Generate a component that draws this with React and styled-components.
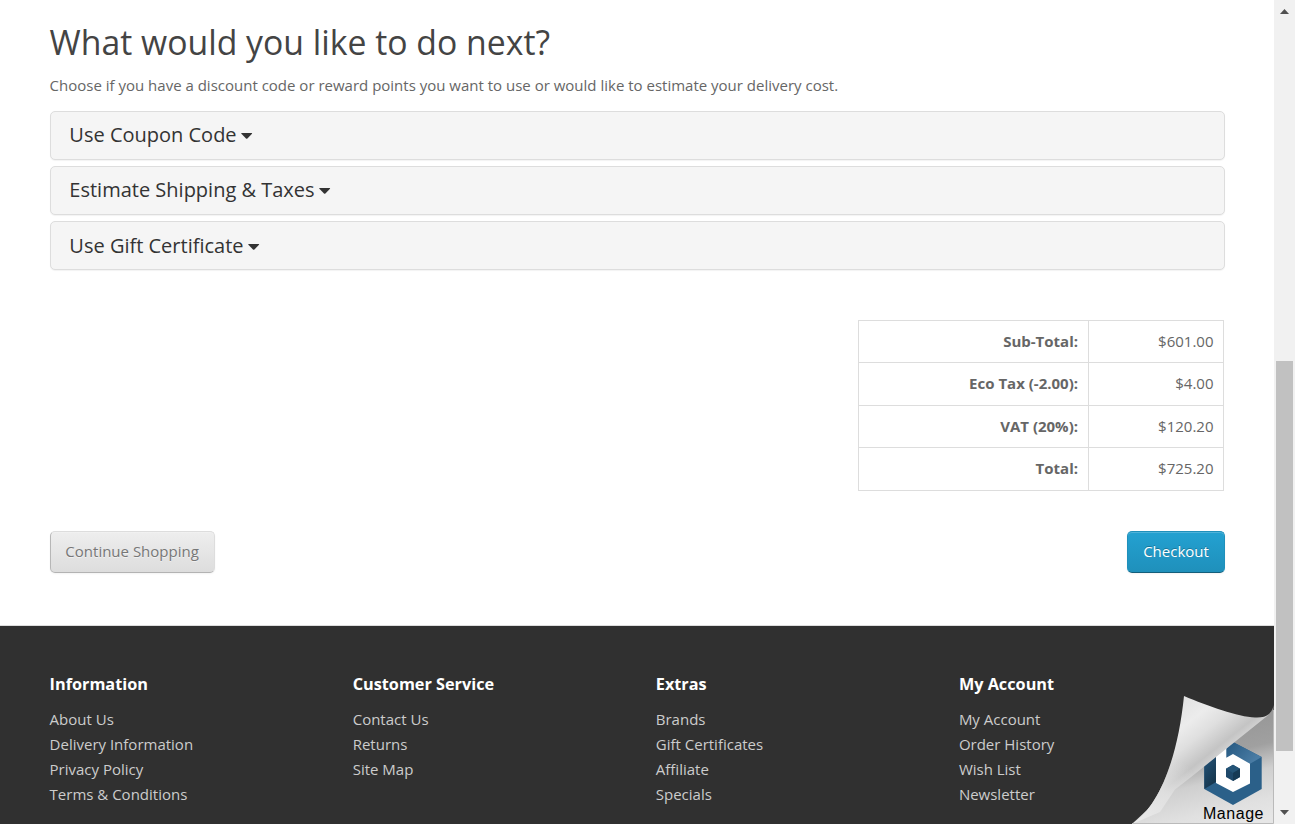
import React from "react";
import styled, { createGlobalStyle } from "styled-components";

const Global = createGlobalStyle`
  * { box-sizing: border-box; }
  body { margin: 0; background: #fff; overflow: hidden; }
`;

const Screen = styled.div`
  display: flex;
  width: 1295px;
  height: 824px;
  overflow: hidden;
  font-family: "Open Sans", sans-serif;
  font-size: 15px;
  line-height: 21.43px;
  color: #666;
`;

const Page = styled.div`
  position: relative;
  flex: 1;
  display: flex;
  flex-direction: column;
  background: #fff;
`;

const Content = styled.main`
  height: 626px;
  padding: 24px 49px 0 49.6px;
  border-bottom: 1px solid #ddd;
`;

const Heading = styled.h2`
  margin: 0;
  font-size: 33.75px;
  line-height: 37px;
  font-weight: 400;
  color: #444;
`;

const Intro = styled.p`
  margin: 14px 0 14.6px;
`;

const Panels = styled.div`
  display: flex;
  flex-direction: column;
  gap: 6px;
`;

const Panel = styled.section`
  display: flex;
  align-items: center;
  height: 49px;
  padding: 0 18.75px;
  background: #f5f5f5;
  border: 1px solid #ddd;
  border-radius: 5px;
  box-shadow: 0 1px 1px rgba(0, 0, 0, 0.05);

  &:last-child {
    padding-top: 2px;
  }
`;

const PanelTitle = styled.h4`
  display: flex;
  align-items: center;
  gap: 4px;
  margin: 0 0 1px;
  font-size: 20px;
  line-height: 22px;
  font-weight: 400;
  color: #333;
`;

const CaretIcon = styled.svg`
  width: 12px;
  height: 6px;
  margin-top: 1px;
`;

const Totals = styled.table`
  width: 366px;
  margin: 50px 1px 0 auto;
  border-collapse: collapse;
  border: 1px solid #ddd;
`;

const TotalRow = styled.tr`
  height: 42px;

  &:nth-child(even) {
    height: 43px;
  }
`;

const TotalCell = styled.td`
  width: ${(p) => p.$width}px;
  padding: 0 ${(p) => (p.$strong ? 10 : 9.5)}px;
  border: 1px solid #ddd;
  text-align: right;
  font-weight: ${(p) => (p.$strong ? 700 : 400)};
`;

const Actions = styled.div`
  display: flex;
  justify-content: space-between;
  margin-top: 40px;
`;

const Button = styled.button`
  width: ${(p) => p.$width}px;
  height: 42px;
  padding: 0;
  font: inherit;
  border: 1px solid;
  border-radius: 5px;
  ${(p) =>
    p.$primary
      ? `
    color: #fff;
    text-shadow: 0 -1px 0 rgba(0, 0, 0, 0.25);
    background: linear-gradient(#23a1d1, #1f90bb);
    border-color: #1f90bb #1f90bb #145e7a;
  `
      : `
    color: #777;
    text-shadow: 0 1px 0 rgba(255, 255, 255, 0.5);
    background: linear-gradient(#eee, #ddd);
    border-color: #ddd #ddd #b3b3b3 #b7b7b7;
  `}
  box-shadow: inset 0 1px 0 rgba(255, 255, 255, 0.2), 0 1px 2px rgba(0, 0, 0, 0.05);
`;

const Footer = styled.footer`
  flex: 1;
  display: grid;
  grid-template-columns: repeat(4, 303.1px);
  padding: 47px 0 0 49.6px;
  background: #303030;
  color: #ccc;
`;

const FooterTitle = styled.h5`
  margin: 0 0 12px;
  font-size: 16.25px;
  line-height: 22px;
  font-weight: 700;
  color: #fff;
`;

const LinkList = styled.ul`
  margin: 0;
  padding: 0;
  list-style: none;
  line-height: 25px;
`;

const PageCurl = styled.svg`
  position: absolute;
  right: 0;
  bottom: 0;
  width: 144px;
  height: 130px;
  font-family: "Liberation Sans", Arial, sans-serif;
`;

const Scrollbar = styled.div`
  display: flex;
  flex-direction: column;
  align-items: center;
  width: 21px;
  padding: 9px 0 7px;
  background: #f1f1f1;
`;

const Thumb = styled.div`
  width: 17px;
  height: 390px;
  margin: 347px 1px 59px 0;
  background: #c1c1c1;
`;

const Arrow = styled.svg`
  width: 9px;
  height: 5px;
  flex: none;
`;

const panels = ["Use Coupon Code", "Estimate Shipping & Taxes", "Use Gift Certificate"];

const totals = [
  ["Sub-Total:", "$601.00"],
  ["Eco Tax (-2.00):", "$4.00"],
  ["VAT (20%):", "$120.20"],
  ["Total:", "$725.20"],
];

const columns = [
  ["Information", ["About Us", "Delivery Information", "Privacy Policy", "Terms & Conditions"]],
  ["Customer Service", ["Contact Us", "Returns", "Site Map"]],
  ["Extras", ["Brands", "Gift Certificates", "Affiliate", "Specials"]],
  ["My Account", ["My Account", "Order History", "Wish List", "Newsletter"]],
];

function ManageCurl() {
  return (
    <PageCurl viewBox="0 0 144 130">
      <defs>
        <linearGradient id="under" gradientUnits="userSpaceOnUse" x1="112" y1="30" x2="135" y2="125">
          <stop offset="0" stopColor="#999" />
          <stop offset="0.25" stopColor="#a0a0a0" />
          <stop offset="0.5" stopColor="#cfcfcf" />
          <stop offset="0.8" stopColor="#e0e0e0" />
          <stop offset="1" stopColor="#e6e6e6" />
        </linearGradient>
        <linearGradient id="fold" gradientUnits="userSpaceOnUse" x1="54" y1="2" x2="96" y2="55">
          <stop offset="0" stopColor="#e2e2e2" />
          <stop offset="0.35" stopColor="#ececec" />
          <stop offset="0.6" stopColor="#dfdfdf" />
          <stop offset="0.9" stopColor="#c4c4c4" />
          <stop offset="1" stopColor="#d0d0d0" />
        </linearGradient>
        <linearGradient id="tip" gradientUnits="userSpaceOnUse" x1="10" y1="124" x2="58" y2="72">
          <stop offset="0" stopColor="#e8e8e8" />
          <stop offset="0.5" stopColor="#e2e2e2" stopOpacity="0.85" />
          <stop offset="1" stopColor="#ddd" stopOpacity="0" />
        </linearGradient>
        <linearGradient id="top" x1="0" y1="0" x2="1" y2="0.5">
          <stop offset="0" stopColor="#245780" />
          <stop offset="1" stopColor="#4b7da5" />
        </linearGradient>
        <linearGradient id="left" x1="0" y1="0" x2="0.4" y2="1">
          <stop offset="0" stopColor="#285b84" />
          <stop offset="1" stopColor="#16374f" />
        </linearGradient>
      </defs>
      <path d="M2 130 L45 90 L136 22 C140 20 143 16 143.500 11 L144 130Z" fill="url(#under)" />
      <path d="M103 48 L131.700 63 V95 L103 111 L74.300 95 V63Z" fill="#2b6089" />
      <path d="M96 51 L103 48 L131.700 63 L120 69.700 L103 60 L96 64Z" fill="url(#top)" />
      <path d="M74.300 60 L86 52 V88 L74.300 95Z" fill="url(#left)" />
      <path d="M86 53 L96.300 46 V63.700 L103 60 L120 69.700 V89.500 L103 98 L86 89Z" fill="#fff" />
      <path d="M103 70.700 L110 74.800 V83 L103 87 L96 83 V74.800Z" fill="#1e486a" />
      <path d="M103 70.700 L110 74.800 L103 79 L96 74.800Z" fill="#245477" />
      <path d="M103 79 L110 74.800 V83 L103 87Z" fill="#163a55" />
      <path
        d="M2 130 C30 112 48 62 54 2 C78 12 108 23 125 23.500 C131 23.800 136 22.800 139 20.500 L63 81.500 L45 95.500 C30 107 18 117 2 130Z"
        fill="url(#fold)"
      />
      <path d="M2 130 C30 112 48 62 54 2 L63 81.500 L45 95.500 L30 118 L2 130Z" fill="url(#tip)" />
      <path d="M2 129.500 H143.500 V16" fill="none" stroke="#bababa" strokeWidth="1" />
      <text x="73" y="125" fontSize="16" textLength="60.500" lengthAdjust="spacing" fill="#000">Manage</text>
    </PageCurl>
  );
}

export default function App() {
  return (
    <Screen>
      <Global />
      <Page>
        <Content>
          <Heading>What would you like to do next?</Heading>
          <Intro>
            Choose if you have a discount code or reward points you want to use or would like to
            estimate your delivery cost.
          </Intro>
          <Panels>
            {panels.map((title) => (
              <Panel key={title}>
                <PanelTitle>
                  {title}
                  <CaretIcon viewBox="0 0 12 6">
                    <path d="M0.700 0H10.500Q11.500 0 11 0.800L6.400 5.400Q5.700 6 5 5.400L0.400 0.800Q0 0 0.700 0Z" fill="#333" />
                  </CaretIcon>
                </PanelTitle>
              </Panel>
            ))}
          </Panels>
          <Totals>
            <tbody>
              {totals.map(([label, value]) => (
                <TotalRow key={label}>
                  <TotalCell $strong $width={230}>{label}</TotalCell>
                  <TotalCell $width={135}>{value}</TotalCell>
                </TotalRow>
              ))}
            </tbody>
          </Totals>
          <Actions>
            <Button $width={165}>Continue Shopping</Button>
            <Button $primary $width={98}>Checkout</Button>
          </Actions>
        </Content>
        <Footer>
          {columns.map(([title, links]) => (
            <div key={title}>
              <FooterTitle>{title}</FooterTitle>
              <LinkList>
                {links.map((link) => (
                  <li key={link}>{link}</li>
                ))}
              </LinkList>
            </div>
          ))}
        </Footer>
        <ManageCurl />
      </Page>
      <Scrollbar>
        <Arrow viewBox="0 0 9 5"><path d="M0 5L4.500 0L9 5Z" fill="#505050" /></Arrow>
        <Thumb />
        <Arrow viewBox="0 0 9 5"><path d="M0 0H9L4.500 5Z" fill="#505050" /></Arrow>
      </Scrollbar>
    </Screen>
  );
}
